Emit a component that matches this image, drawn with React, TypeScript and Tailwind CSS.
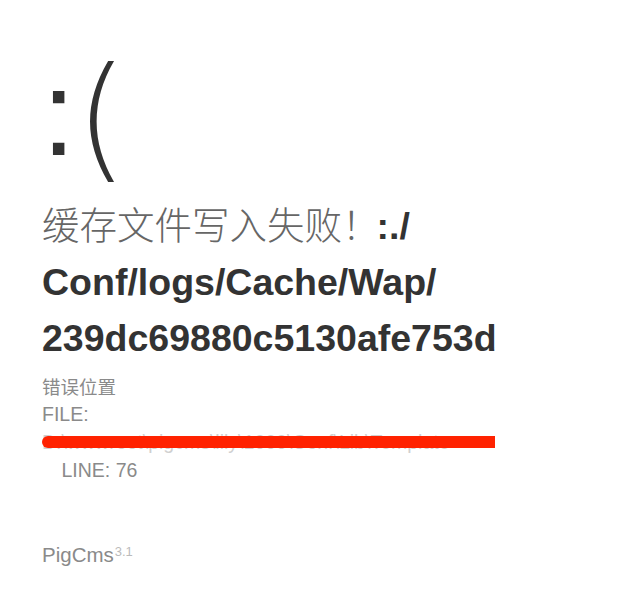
import React from "react";

const latin = "font-['Liberation_Sans','Noto_Sans_CJK_SC',sans-serif]";

export default function App() {
  return (
    <div className={`w-[636px] h-[593px] bg-white overflow-hidden pl-[42px] pt-[50px] ${latin}`}>
      <div className="w-[453px]">
        <div className="h-[120px] text-[120px] leading-[120px] font-normal text-[#333] whitespace-nowrap">
          <span>:</span>
          <span className="text-[135px] leading-none font-extralight align-[-9px] font-['DejaVu_Sans',sans-serif]">(</span>
        </div>
        <div className="mt-[25px] text-[37.5px] leading-[56px] whitespace-nowrap">
          <div>
            <span className="text-[#666] font-['Noto_Sans_CJK_SC',sans-serif] font-light">缓存文件写入失败！</span>
            <span className="font-bold text-[#333] ml-[-3px]">:./</span>
          </div>
          <div className="font-bold text-[#333]">Conf/logs/Cache/Wap/</div>
          <div className="font-bold text-[#333]">239dc69880c5130afe753d</div>
        </div>
        <div className="mt-[6px] text-[19.5px] leading-[28px] text-[#8a8a8a] whitespace-nowrap">
          <div className="font-['Noto_Sans_CJK_SC',sans-serif] text-[18.5px]">错误位置</div>
          <div>FILE:</div>
          <div className="relative h-[28px] overflow-hidden text-[#d0d0d0]">
            D:\wwwroot\pigcms\lily\1000\Conf\Lib\Template
            <div className="absolute left-0 top-[8px] h-[12px] w-[453px] rounded-l-full bg-[#ff2200]"></div>
          </div>
          <div>{"\u3000"}LINE: 76</div>
        </div>
      </div>
      <div className="mt-[57px] text-[20.5px] leading-[28px] text-[#8a8a8a]">
        PigCms<sup className="text-[13px] text-[#bbb] ml-[1px]">3.1</sup>
      </div>
    </div>
  );
}
